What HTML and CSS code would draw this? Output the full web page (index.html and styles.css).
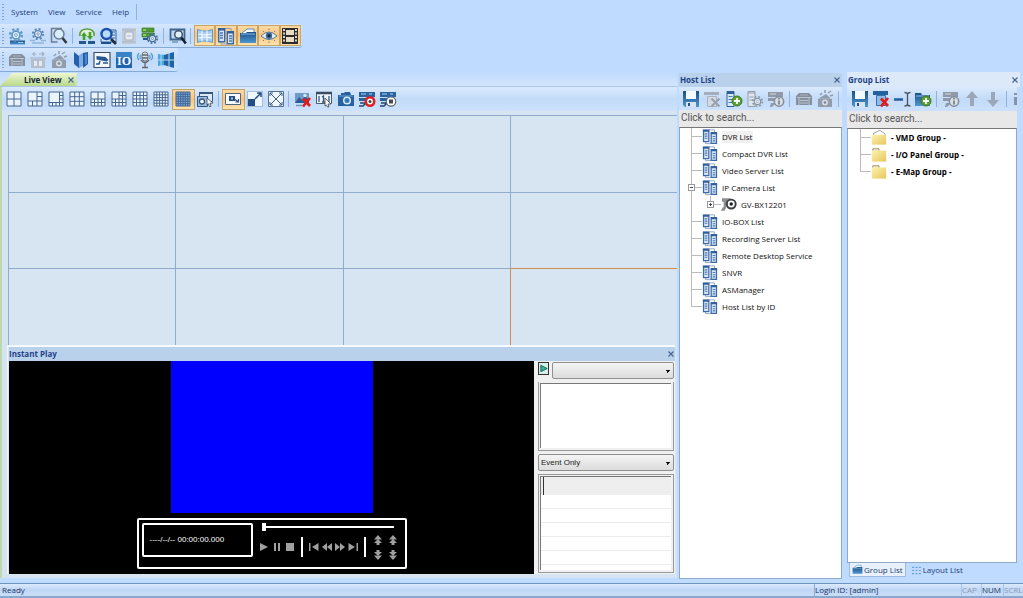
FILE: index.html
```html
<!DOCTYPE html>
<html lang="en">
<head>
<meta charset="utf-8">
<title>Control Center</title>
<link rel="stylesheet" href="styles.css">
</head>
<body>
<svg class="defs" aria-hidden="true">
  <defs>
    <linearGradient id="blue" x1="0" y1="0" x2="0" y2="1"><stop offset="0" stop-color="#1c4f86"/><stop offset="1" stop-color="#4d97d3"/></linearGradient>
    <linearGradient id="yel" x1="0" y1="0" x2="1" y2="1"><stop offset="0" stop-color="#fff3b0"/><stop offset="1" stop-color="#e6c65c"/></linearGradient>
    <symbol id="gearshape" viewBox="0 0 18 18"><circle cx="9" cy="9" r="6.6" fill="none" stroke="currentColor" stroke-width="2.4" stroke-dasharray="2.6 2.58"/><circle cx="9" cy="9" r="4.4" fill="#e6f2fc" stroke="currentColor" stroke-width="1.8"/><circle cx="9" cy="9" r="1.6" fill="#fff" stroke="currentColor"/></symbol>
    <symbol id="gear" viewBox="0 0 18 18"><path d="M2 13.500h15v4H2z" fill="url(#blue)"/><use href="#gearshape" color="#5b93c4" x="0" y="0" width="16" height="16"/><path d="M10 15.500h5" stroke="#9cc9ee"/></symbol>
    <symbol id="gear2" viewBox="0 0 18 18"><use href="#gearshape" color="#5a82b0" x="2" width="14" height="14"/><path d="M1 13.500h5M12 13.500h5M3 16h12" stroke="#8db5dd" stroke-width="1.400"/></symbol>
    <symbol id="loglens" viewBox="0 0 18 18"><path d="M1 1.500h11M1.500 1v14h6" fill="none" stroke="#6d7d8e" stroke-width="1.500"/><circle cx="9" cy="7" r="5" fill="#d8ecfb" stroke="#6d7f91" stroke-width="1.500"/><path d="M12.500 11l4 5" stroke="#33383f" stroke-width="2.600"/></symbol>
    <symbol id="update" viewBox="0 0 18 18"><path d="M2 9C1 4 5 2 9 2s8 2 7 7" fill="#dff0d9" stroke="#5d9a3c" stroke-width="1.500"/><path d="M6 5l3 4H7.300v4h-2.600V9H3zM12 13l-3-4h1.700V5h2.600v4H15z" fill="#43a224"/><path d="M1 14h7v3H1zM10 14h7v3h-7z" fill="#24588f"/></symbol>
    <symbol id="hostlens" viewBox="0 0 18 18"><path d="M8 3h9v12H2v-3" fill="#cfe3f7" stroke="#2f6098"/><path d="M11 5h5M11 8h5M11 11h5" stroke="#2f6098"/><circle cx="7.500" cy="7" r="5" fill="#b5dcf9" stroke="#1a4fb0" stroke-width="2.400"/><path d="M2 16h10" stroke="#1a4f90" stroke-width="2"/><path d="M12 12l5 5" stroke="#222b3a" stroke-width="2.600"/></symbol>
    <symbol id="frame" viewBox="0 0 18 18"><path d="M2 1h14v16H2z" fill="#c4ccd8"/><path d="M5 5h8v8H5z" fill="#e7ebf0" stroke="#a4adbb"/><path d="M7 9h4M2 3h14M2 15h14" stroke="#abb4c3"/></symbol>
    <symbol id="servergear" viewBox="0 0 18 18"><path d="M1 1h12v4H1zM1 6h12v4H1z" fill="#4f9b31" stroke="#3a7d22" stroke-width=".7"/><path d="M2 3h3M2 8h3" stroke="#d3efbe"/><path d="M2 12h5" stroke="#24588f" stroke-width="2"/><use href="#gearshape" color="#456d9a" x="5" y="5" width="13" height="13"/></symbol>
    <symbol id="screenlens" viewBox="0 0 18 18"><path d="M1.500 2.500h14v10h-14z" fill="#bed8f1" stroke="#3f648f" stroke-width="1.800"/><path d="M3 15h6" stroke="#6f93b9" stroke-width="1.500"/><circle cx="9.500" cy="7.500" r="3.800" fill="#e2f1fc" stroke="#41526a" stroke-width="1.500"/><path d="M12.300 10.500l4.500 6" stroke="#17202c" stroke-width="2.500"/></symbol>
    <symbol id="gridwall" viewBox="0 0 18 18"><path d="M1.500 2.500c5 2 10 2 15 0v13c-5-2-10-2-15 0z" fill="#a6cdf1" stroke="#5f98d2"/><path d="M6 3.500v11M11 3.500v11M2 7c5 1 10 1 14 0M2 11c5-1 10-1 14 0" fill="none" stroke="#f2f8fe" stroke-width="1.200"/></symbol>
    <symbol id="hosts" viewBox="0 0 18 18"><path d="M8 1.500h6v3M4 15v2h6" fill="none" stroke="#8ba0bb"/><path d="M1.700 1.700h6v13h-6z" fill="#d7e5f5" stroke="#3c6aa6" stroke-width="1.400"/><path d="M10.300 4.700h6v12h-6z" fill="#d7e5f5" stroke="#3c6aa6" stroke-width="1.400"/><path d="M1 2.500h7M10 5.500h7" stroke="#315f99" stroke-width="2.200"/><path d="M3 6h3M3 8.500h3M3 11h3M12 9h3M12 11.500h3M12 14h3" stroke="#4e7ab5" stroke-width="1.300"/></symbol>
    <symbol id="bluefolder" viewBox="0 0 18 18"><path d="M3 6l5-4h7v4" fill="#f5fbff" stroke="#5c8fc0"/><path d="M1 6h6l1-1h9v11H1z" fill="url(#blue)"/><path d="M2 7h14" stroke="#84bdec"/></symbol>
    <symbol id="eye" viewBox="0 0 18 18"><path d="M1 9q8-8 16 0q-8 7-16 0z" fill="#e7f0f8" stroke="#53779d"/><circle cx="9" cy="8.800" r="3.200" fill="#3d668f"/><circle cx="9" cy="8.800" r="1.300" fill="#0d1f33"/><path d="M3 4l1 1M9 1.500V3M15 4l-1 1M3 14l1-1M9 16v-1.500M15 14l-1-1" stroke="#6585a8"/></symbol>
    <symbol id="film" viewBox="0 0 18 18"><path d="M1 1h16v16H1z" fill="#302a28"/><path d="M5 3h8v5H5zM5 10h8v5H5z" fill="#e6dcc8"/><path d="M3 2v14M15 2v14" stroke="#fff" stroke-width="1.600" stroke-dasharray="2 1.500"/></symbol>
    <symbol id="rack" viewBox="0 0 18 18"><path d="M4 3h10l3 3v9H1V6z" fill="#858f9e"/><path d="M2 7.500h14M5 10.500h8M5 13h8M4 8v7M14 8v7" stroke="#bac3cf"/><path d="M5 5h8" stroke="#a7b1bf"/></symbol>
    <symbol id="iogray" viewBox="0 0 18 18"><path d="M2 8h14v9H2z" fill="#b7becb"/><path d="M5 10h3v5H5zM10 10h3v5h-3z" fill="#e4e9ef"/><path d="M3 3h4M5 1v4M10 3h5M13 1l2 2-2 2M1 7h16" fill="none" stroke="#a5afbe" stroke-width="1.200"/></symbol>
    <symbol id="alarm" viewBox="0 0 18 18"><path d="M2 9h14v8H2z" fill="#929cab"/><path d="M5 8l5-3 3 3zM4 5l2-2M9 3V0M12 3l3-2M14 6l3-1" fill="#8b95a4" stroke="#929cab" stroke-width="1.500"/><circle cx="9" cy="12.500" r="3" fill="#d5dbe3"/><circle cx="9" cy="12.500" r="1.300" fill="#7d8796"/></symbol>
    <symbol id="map" viewBox="0 0 18 18"><path d="M2 1l5 4v12l-5-4zM7 5l4-3v12l-4 3zM11 2l5-1v12l-5 4z" fill="#275faa"/><path d="M7 5l4-3v12l-4 3z" fill="#79aee4"/><path d="M14 3v10" stroke="#5b93d3" stroke-width="1.500"/></symbol>
    <symbol id="cam" viewBox="0 0 18 18"><path d="M1 1.500h16v15H1z" fill="#f4f8fc" stroke="#3d4f66" stroke-width="1.200"/><path d="M3.500 5l9 1 3 3-2 1.500-10-2z" fill="#25568f"/><path d="M7 10l-1 3H3M10 12h5" fill="none" stroke="#25568f" stroke-width="1.500"/></symbol>
    <symbol id="iobadge" viewBox="0 0 18 18"><path d="M1 1h16v16H1z" fill="#1e65ae"/><path d="M1 1h16v6H1z" fill="#3b83c7"/><text x="9" y="14" text-anchor="middle" font-family="Liberation Serif, serif" font-size="12" font-weight="700" fill="#fff">IO</text></symbol>
    <symbol id="mic" viewBox="0 0 18 18"><rect x="6" y="1" width="6" height="9" rx="3" fill="#dce1e6" stroke="#777d85"/><path d="M6 4h6M6 7h6M5 9q4 5 8 0M9 12v4M6 16.500h6" fill="none" stroke="#626870" stroke-width="1.300"/><path d="M3 2q-3 4 0 7M15 2q3 4 0 7M4.500 4q-1 2 0 4M13.500 4q1 2 0 4" fill="none" stroke="#56a0d2" stroke-width="1.300"/></symbol>
    <symbol id="wall" viewBox="0 0 18 18"><path d="M1 3l6 1v10l-6 1z" fill="#49a5dc"/><path d="M7 4l10-3v16L7 14z" fill="#1e64a5"/><path d="M1 9h16M4 3v12M12 2v14" stroke="#b9dcf5"/></symbol>
    <symbol id="g4" viewBox="0 0 18 18"><path d="M2 2h14v14H2zM9 2v14M2 9h14"/></symbol>
    <symbol id="g6" viewBox="0 0 18 18"><path d="M2 2h14v14H2zM11 2v14M2 11h14M11 6.500h5M6.500 11v5"/></symbol>
    <symbol id="g8" viewBox="0 0 18 18"><path d="M2 2h14v14H2zM12.500 2v14M2 12.500h14M12.500 5.500h3.500M12.500 9h3.500M5.500 12.500v3.500M9 12.500v3.500"/></symbol>
    <symbol id="g9" viewBox="0 0 18 18"><path d="M2 2h14v14H2zM6.700 2v14M11.300 2v14M2 6.700h14M2 11.300h14"/></symbol>
    <symbol id="g10" viewBox="0 0 18 18"><path d="M2 2h14v14H2zM9 2v14M2 9h14M2 12.500h14M5.500 9v7M12.500 9v7"/></symbol>
    <symbol id="g13" viewBox="0 0 18 18"><path d="M2 2h14v14H2zM9 2v14M2 9h14M9 5.500h7M12.500 2v14M2 12.500h14M5.500 9v7"/></symbol>
    <symbol id="g16" viewBox="0 0 18 18"><path d="M2 2h14v14H2zM5.500 2v14M9 2v14M12.500 2v14M2 5.500h14M2 9h14M2 12.500h14"/></symbol>
    <symbol id="g25" viewBox="0 0 18 18"><path d="M2 2h14v14H2zM4.800 2v14M7.600 2v14M10.400 2v14M13.200 2v14M2 4.800h14M2 7.600h14M2 10.400h14M2 13.200h14"/></symbol>
    <symbol id="g36" viewBox="0 0 18 18"><path fill="#78aee4" d="M2 2h14v14H2zM4.300 2v14M6.700 2v14M9 2v14M11.300 2v14M13.700 2v14M2 4.300h14M2 6.700h14M2 9h14M2 11.300h14M2 13.700h14"/></symbol>
    <symbol id="custom" viewBox="0 0 18 18"><path d="M3.500 2.500h13v9h-13z" fill="#dceaf8" stroke="#35587f"/><path d="M3 3h14" stroke="#35587f" stroke-width="2"/><path d="M1.500 6.500h10v10h-10z" fill="#9bbbdc" stroke="#35587f"/><circle cx="6" cy="11.500" r="2.500" fill="#fff" stroke="#35587f" stroke-width="1.300"/><path d="M11 8l6 5-3 .3 1 3-1.500.5-1-3-1.500 1z" fill="#fff" stroke="#3c4650" stroke-width=".8"/></symbol>
    <symbol id="pip" viewBox="0 0 18 18"><path d="M1.500 3.500h15v11h-15z" fill="#f6faff" stroke="#4d6784"/><path d="M5 6h6v5H5z" fill="#244f80"/><path d="M7 7.500h2v2H7z" fill="#a5c6e7"/><path d="M11 9.500l3.500 2.500M14.500 9v3h-3" fill="none" stroke="#244f80" stroke-width="1.200"/></symbol>
    <symbol id="zoomto" viewBox="0 0 18 18"><path d="M1.500 1.500h15v15h-15z" fill="#eef6fe" stroke="#7390af" stroke-dasharray="1 1"/><path d="M2 9h7v7H2z" fill="#224f83"/><path d="M9 9l6-6M11 3h4v4" fill="none" stroke="#224f83" stroke-width="1.500"/></symbol>
    <symbol id="full" viewBox="0 0 18 18"><path d="M1.500 1.500h15v15h-15z" fill="#f0f7fe" stroke="#54718f"/><path d="M3 3l12 12M15 3L3 15M3 6V3h3M12 3h3v3M3 12v3h3M12 15h3v-3" fill="none" stroke="#3c5d80"/></symbol>
    <symbol id="redx" viewBox="0 0 18 18"><path d="M9 8.500l7 7.500M16 8L9 16.500" stroke="#e01b1b" stroke-width="2.700"/></symbol>
    <symbol id="camx" viewBox="0 0 18 18"><path d="M1 3h14v10H1z" fill="#6d9ac9"/><path d="M1 13l4-6 3 3 3-4 4 4v3z" fill="#2b5d94"/><circle cx="11" cy="5.500" r="1.700" fill="#d6e8f8"/><path d="M2 15.500h6" stroke="#7796b7" stroke-width="1.500"/><use href="#redx"/></symbol>
    <symbol id="pages" viewBox="0 0 18 18"><path d="M1.500 2.500h15v11h-15z" fill="#edf4fa" stroke="#4a5b6e"/><path d="M1 3h16" stroke="#3b4c61" stroke-width="2.500"/><path d="M4 6v6M14 6v6M7 7l1.500-1v6M7 12h3" fill="none" stroke="#35587f" stroke-width="1.300"/><path d="M10 8l6 6-3 0 1 3-1.500 0-1-2-1.500 1z" fill="#fff" stroke="#444" stroke-width=".8"/></symbol>
    <symbol id="photo" viewBox="0 0 18 18"><path d="M1 5h3V3h3l1-1h5l1 3h3v11H1z" fill="#27629f"/><path d="M2 6h14" stroke="#6ea6db"/><circle cx="10" cy="10.500" r="4" fill="#d7eafa"/><circle cx="10" cy="10.500" r="2.500" fill="#3a75b0"/></symbol>
    <symbol id="recsrv" viewBox="0 0 18 18"><path d="M1 2h16v5H1zM1 8h8v3H1z" fill="#2b639f"/><path d="M3 4h5M11 4h3" stroke="#afd1f1" stroke-width="1.200"/><path d="M2 13h6l-3 3H1" fill="none" stroke="#23466e" stroke-width="1.500"/></symbol>
    <symbol id="rec" viewBox="0 0 18 18"><use href="#recsrv"/><circle cx="12" cy="11.500" r="4.200" fill="#fff" stroke="#d92323" stroke-width="2.600"/><circle cx="12" cy="11.500" r="1.500" fill="#444"/></symbol>
    <symbol id="recstop" viewBox="0 0 18 18"><use href="#recsrv"/><circle cx="12" cy="11.500" r="4.700" fill="#fff" stroke="#5d646c" stroke-width="1.200"/><path d="M10 9.500h4v4h-4z" fill="#444a52"/></symbol>
    <symbol id="save" viewBox="0 0 18 18"><path d="M1 1h16v16H3l-2-2z" fill="url(#blue)"/><path d="M4 1h10v8H4z" fill="#f4f9fe"/><path d="M4 12h10v5H4z" fill="#d8e3ee"/><path d="M6 13h2v3H6z" fill="#234f82"/></symbol>
    <symbol id="delgray" viewBox="0 0 18 18"><path d="M1 2h15v3H1z" fill="#a4aebb"/><path d="M4.500 6.500h9v10h-9z" fill="#d3dae3" stroke="#a9b2be"/><path d="M8.500 8.500l8 8M16.500 8.500l-8 8" stroke="#98a2af" stroke-width="2.200"/></symbol>
    <symbol id="plus" viewBox="0 0 18 18"><circle cx="12" cy="11" r="5" fill="#5aa233" stroke="#3d7a20"/><path d="M12 8v6M9 11h6" stroke="#fff" stroke-width="1.800"/></symbol>
    <symbol id="addhost" viewBox="0 0 18 18"><path d="M2 1.500h7v15H2z" fill="#d8e9f8" stroke="#315f99"/><path d="M2 3h7" stroke="#315f99" stroke-width="2"/><path d="M3.500 6.500h4M3.500 9.500h4M3.500 12.500h4" stroke="#4778af"/><use href="#plus"/></symbol>
    <symbol id="hostgear" viewBox="0 0 18 18"><path d="M2 1.500h7v15H2z" fill="#e1e7ed" stroke="#929dab"/><path d="M2 3h7M3.500 7h4M3.500 10h4" stroke="#929dab"/><use href="#gearshape" color="#8a97a7" x="5" y="5" width="13" height="13"/></symbol>
    <symbol id="info" viewBox="0 0 18 18"><path d="M1 2h15v5H1zM1 8h7v3H1zM4 13h5l-4 4H3z" fill="#8f99a7"/><path d="M3 4h6" stroke="#d4dae1"/><circle cx="12" cy="11.500" r="4.700" fill="#d9dee5" stroke="#828c9a" stroke-width="1.500"/><path d="M12 8v1.500M12 10.500v4" stroke="#7b8593" stroke-width="1.800"/></symbol>
    <symbol id="delgroup" viewBox="0 0 18 18"><path d="M1 1h15v4H1z" fill="#245f9f"/><path d="M4.500 5.500h9v10h-9z" fill="#8dbce9" stroke="#3672ad"/><use href="#redx"/></symbol>
    <symbol id="rename" viewBox="0 0 18 18"><path d="M1 9.500h9" stroke="#245f9f" stroke-width="2.500"/><path d="M11.500 2.500q3 0 3 2q0-2 3-2M11.500 16q3 0 3-2q0 2 3 2M14.500 4v10" fill="none" stroke="#45515f" stroke-width="1.300"/></symbol>
    <symbol id="addfolder" viewBox="0 0 18 18"><path d="M1 3h6l1 2h8v11H1z" fill="url(#blue)"/><path d="M2 6h13" stroke="#8dc2ef"/><use href="#plus"/></symbol>
    <symbol id="up" viewBox="0 0 18 18"><path d="M9 1l6 7h-4v8H7V8H3z" fill="#9ba6b8"/></symbol>
    <symbol id="down" viewBox="0 0 18 18"><path d="M9 17l6-7h-4V2H7v8H3z" fill="#9ba6b8"/></symbol>
    <symbol id="part" viewBox="0 0 18 18"><path d="M2 3h10v2H2zM2 7h3v8H2z" fill="#8793a5"/></symbol>
    <symbol id="ipcam" viewBox="0 0 18 18"><path d="M1 2h10v4H6v6l-2 4H0l2-4h1V6H1z" fill="#8b8e91"/><circle cx="11.500" cy="8.500" r="5" fill="#fff" stroke="#3a3c3e" stroke-width="2.200"/><circle cx="11.500" cy="8.500" r="2" fill="#222"/></symbol>
    <symbol id="folder" viewBox="0 0 18 18"><path d="M2 5V2.500h7V5" fill="#eeeacb" stroke="#9b8c62"/><path d="M1 4.500h16v12.500H1z" fill="url(#yel)"/></symbol>
    <symbol id="openfolder" viewBox="0 0 18 18"><path d="M3 7V4l7-3 6 4v3" fill="#fff" stroke="#999"/><path d="M1 6h16v11H1z" fill="url(#yel)"/></symbol>
    <symbol id="layout" viewBox="0 0 18 18"><path d="M2 4h14M2 9h14M2 14h14" stroke="#5d9bd8" stroke-width="2" stroke-dasharray="3 2.500"/></symbol>
    <symbol id="close" viewBox="0 0 8 8"><path d="M1.500 1.500l5 5M6.500 1.500l-5 5" stroke="#46628e" stroke-width="1.100"/></symbol>
    <symbol id="play" viewBox="0 0 10 10"><path d="M1 1l8 4-8 4z"/></symbol>
    <symbol id="pause" viewBox="0 0 10 10"><path d="M2 1h2v8H2zM6 1h2v8H6z"/></symbol>
    <symbol id="stop" viewBox="0 0 10 10"><path d="M1 1h8v8H1z"/></symbol>
    <symbol id="first" viewBox="0 0 10 10"><path d="M0 1h1.500v8H0zM9.500 1v8L3 5z"/></symbol>
    <symbol id="rew" viewBox="0 0 10 10"><path d="M5 1v8L0 5zM10 1v8L5 5z"/></symbol>
    <symbol id="ff" viewBox="0 0 10 10"><path d="M0 1v8l5-4zM5 1v8l5-4z"/></symbol>
    <symbol id="last" viewBox="0 0 10 10"><path d="M8.500 1H10v8H8.500zM.5 1v8L7 5z"/></symbol>
    <symbol id="dup" viewBox="0 0 10 10"><path d="M5 0l4 4.500H1zM5 4l4 4H6.500v2h-3V8H1z"/></symbol>
    <symbol id="ddn" viewBox="0 0 10 10"><path d="M5 10l4-4.500H1zM5 6L1 2h2.500V0h3v2H9z"/></symbol>
  </defs>
</svg>

<header class="top">
  <nav class="menu">
    <span class="grip"></span>
    <button>System</button><button>View</button><button>Service</button><button>Help</button>
    <span class="sep"></span>
  </nav>
  <div class="bar">
    <span class="grip"></span>
    <div class="set s3"><button aria-label="System configure"><svg><use href="#gear"/></svg></button><button aria-label="Preferences"><svg><use href="#gear2"/></svg></button><button aria-label="Log"><svg><use href="#loglens"/></svg></button></div>
    <span class="sep"></span>
    <div class="set s4"><button aria-label="Update"><svg><use href="#update"/></svg></button><button aria-label="Search host"><svg><use href="#hostlens"/></svg></button><button aria-label="Layout" disabled><svg><use href="#frame"/></svg></button><button aria-label="Host settings"><svg><use href="#servergear"/></svg></button></div>
    <span class="sep"></span>
    <div class="set s1"><button aria-label="Find"><svg><use href="#screenlens"/></svg></button></div>
    <span class="sep"></span>
    <div class="set s5"><button class="on" aria-label="Live view"><svg><use href="#gridwall"/></svg></button><button class="on" aria-label="Host list"><svg><use href="#hosts"/></svg></button><button class="on" aria-label="Group list"><svg><use href="#bluefolder"/></svg></button><button class="on" aria-label="Monitor"><svg><use href="#eye"/></svg></button><button class="on" aria-label="Instant play"><svg><use href="#film"/></svg></button></div>
  </div>
  <div class="bar">
    <span class="grip"></span>
    <div class="set s8"><button aria-label="Remote DVR" disabled><svg><use href="#rack"/></svg></button><button aria-label="I/O" disabled><svg><use href="#iogray"/></svg></button><button aria-label="Alarm" disabled><svg><use href="#alarm"/></svg></button><button aria-label="E-Map"><svg><use href="#map"/></svg></button><button aria-label="Camera"><svg><use href="#cam"/></svg></button><button aria-label="I/O panel"><svg><use href="#iobadge"/></svg></button><button aria-label="Audio broadcast"><svg><use href="#mic"/></svg></button><button aria-label="Video wall"><svg><use href="#wall"/></svg></button></div>
  </div>
</header>

<main class="work">
  <section class="live">
    <div class="tabs"><h2 class="tab">Live View <button aria-label="Close Live View"><svg class="x"><use href="#close"/></svg></button></h2></div>
    <div class="frame">
      <div class="tools livetools">
        <div class="set s10 grids"><button aria-label="4 divisions"><svg><use href="#g4"/></svg></button><button aria-label="6 divisions"><svg><use href="#g6"/></svg></button><button aria-label="8 divisions"><svg><use href="#g8"/></svg></button><button aria-label="9 divisions"><svg><use href="#g9"/></svg></button><button aria-label="10 divisions"><svg><use href="#g10"/></svg></button><button aria-label="13 divisions"><svg><use href="#g13"/></svg></button><button aria-label="16 divisions"><svg><use href="#g16"/></svg></button><button aria-label="25 divisions"><svg><use href="#g25"/></svg></button><button class="on" aria-label="36 divisions"><svg><use href="#g36"/></svg></button><button aria-label="Custom layout"><svg><use href="#custom"/></svg></button></div>
        <span class="sep"></span>
        <div class="set s3"><button class="on" aria-label="Picture in picture"><svg><use href="#pip"/></svg></button><button aria-label="Zoom"><svg><use href="#zoomto"/></svg></button><button aria-label="Full screen"><svg><use href="#full"/></svg></button></div>
        <span class="sep"></span>
        <div class="set s5"><button aria-label="Disconnect all"><svg><use href="#camx"/></svg></button><button aria-label="Pages"><svg><use href="#pages"/></svg></button><button aria-label="Snapshot"><svg><use href="#photo"/></svg></button><button aria-label="Start recording"><svg><use href="#rec"/></svg></button><button aria-label="Stop recording"><svg><use href="#recstop"/></svg></button></div>
      </div>
      <div class="matrix"><i></i><i></i><i></i><i></i><i></i><i></i><i></i><i></i><i></i><i></i><i></i><i class="sel"></i></div>
      <section class="instant">
        <h2 class="title">Instant Play <button aria-label="Close Instant Play"><svg class="x"><use href="#close"/></svg></button></h2>
        <div class="playrow">
          <div class="player">
            <div class="video"></div>
            <div class="deck">
              <output class="time">----/--/-- 00:00:00.000</output>
              <div class="controls">
                <input type="range" min="0" max="100" value="0" aria-label="Position">
                <div class="keys">
                  <button aria-label="Play"><svg><use href="#play"/></svg></button><button aria-label="Pause"><svg><use href="#pause"/></svg></button><button aria-label="Stop"><svg><use href="#stop"/></svg></button>
                  <span class="bar-v"></span>
                  <button aria-label="First"><svg><use href="#first"/></svg></button><button aria-label="Rewind"><svg><use href="#rew"/></svg></button><button aria-label="Forward"><svg><use href="#ff"/></svg></button><button aria-label="Last"><svg><use href="#last"/></svg></button>
                  <span class="bar-v"></span>
                  <div class="speeds"><button aria-label="Speed up"><svg><use href="#dup"/></svg></button><button aria-label="Volume up"><svg><use href="#dup"/></svg></button><button aria-label="Speed down"><svg><use href="#ddn"/></svg></button><button aria-label="Volume down"><svg><use href="#ddn"/></svg></button></div>
                </div>
              </div>
            </div>
          </div>
          <aside class="side">
            <div class="pick"><button class="go" aria-label="Query"><svg><use href="#play"/></svg></button><select aria-label="Host"><option></option></select></div>
            <div class="sunken"><div class="well"></div></div>
            <select aria-label="Filter"><option>Event Only</option></select>
            <div class="sunken tall"><div class="well lined"></div></div>
          </aside>
        </div>
      </section>
    </div>
  </section>

  <section class="panel host">
    <h2 class="title">Host List <button aria-label="Close Host List"><svg class="x"><use href="#close"/></svg></button></h2>
    <div class="tools">
      <div class="set s5"><button aria-label="Save"><svg><use href="#save"/></svg></button><button aria-label="Delete" disabled><svg><use href="#delgray"/></svg></button><button aria-label="Add host"><svg><use href="#addhost"/></svg></button><button aria-label="Host settings" disabled><svg><use href="#hostgear"/></svg></button><button aria-label="Host information" disabled><svg><use href="#info"/></svg></button></div>
      <span class="sep"></span>
      <div class="set s2"><button aria-label="Remote DVR" disabled><svg><use href="#rack"/></svg></button><button aria-label="Alarm" disabled><svg><use href="#alarm"/></svg></button></div>
      <span class="sep"></span>
    </div>
    <input class="search" type="text" placeholder="Click to search..." aria-label="Search hosts">
    <ul class="tree">
      <li><span class="twig"></span><svg><use href="#hosts"/></svg><span class="picked">DVR List</span></li>
      <li><span class="twig"></span><svg><use href="#hosts"/></svg>Compact DVR List</li>
      <li><span class="twig"></span><svg><use href="#hosts"/></svg>Video Server List</li>
      <li><span class="twig"><button class="exp" aria-label="Collapse"></button></span><svg><use href="#hosts"/></svg>IP Camera List</li>
      <li><span class="twig through"></span><span class="twig end"><button class="exp plus" aria-label="Expand"></button></span><svg><use href="#ipcam"/></svg>GV-BX12201</li>
      <li><span class="twig"></span><svg><use href="#hosts"/></svg>IO-BOX List</li>
      <li><span class="twig"></span><svg><use href="#hosts"/></svg>Recording Server List</li>
      <li><span class="twig"></span><svg><use href="#hosts"/></svg>Remote Desktop Service</li>
      <li><span class="twig"></span><svg><use href="#hosts"/></svg>SNVR</li>
      <li><span class="twig"></span><svg><use href="#hosts"/></svg>ASManager</li>
      <li><span class="twig end"></span><svg><use href="#hosts"/></svg>Host List by ID</li>
    </ul>
  </section>

  <section class="panel group">
    <h2 class="title">Group List <button aria-label="Close Group List"><svg class="x"><use href="#close"/></svg></button></h2>
    <div class="tools">
      <div class="set s4"><button aria-label="Save"><svg><use href="#save"/></svg></button><button aria-label="Delete group"><svg><use href="#delgroup"/></svg></button><button aria-label="Rename"><svg><use href="#rename"/></svg></button><button aria-label="Add group"><svg><use href="#addfolder"/></svg></button></div>
      <span class="sep"></span>
      <div class="set s3"><button aria-label="Information" disabled><svg><use href="#info"/></svg></button><button aria-label="Move up" disabled><svg><use href="#up"/></svg></button><button aria-label="Move down" disabled><svg><use href="#down"/></svg></button></div>
      <span class="sep"></span>
      <div class="set s1"><button aria-label="More" disabled><svg><use href="#part"/></svg></button></div>
    </div>
    <input class="search" type="text" placeholder="Click to search..." aria-label="Search groups">
    <ul class="tree bold">
      <li><span class="twig"></span><svg><use href="#openfolder"/></svg>- VMD Group -</li>
      <li><span class="twig"></span><svg><use href="#folder"/></svg>- I/O Panel Group -</li>
      <li><span class="twig end"></span><svg><use href="#folder"/></svg>- E-Map Group -</li>
    </ul>
    <div class="foot"><button class="current"><svg><use href="#bluefolder"/></svg>Group List</button><button><svg><use href="#layout"/></svg>Layout List</button></div>
  </section>
</main>

<footer class="status">
  <span class="ready">Ready</span><span class="login">Login ID: [admin]</span><span class="lock">CAP</span><span class="lock lit">NUM</span><span class="lock">SCRL</span>
</footer>
</body>
</html>
```

FILE: styles.css
```css
* { box-sizing: border-box; }
html, body { height: 100%; }
body {
  margin: 0;
  display: flex;
  flex-direction: column;
  overflow: hidden;
  background: #bfdbff;
  color: #1c2f55;
  font: 8px/12px "Open Sans", "Noto Sans", sans-serif;
}
button, select, input { font: inherit; color: inherit; }
button { margin: 0; padding: 0; border: 0; background: none; display: flex; align-items: center; justify-content: center; }
.defs { position: absolute; width: 0; height: 0; }
ul { list-style: none; margin: 0; padding: 0; }
h2 { margin: 0; font-size: 8px; line-height: 12px; }
.x { width: 8px; height: 8px; }

/* menu and main toolbars */
.top { display: flex; flex-direction: column; align-items: flex-start; }
.menu { display: flex; align-items: center; height: 24px; padding-left: 2px; }
.menu button { padding: 0 5px; height: 18px; color: #22407c; }
.grip { width: 2px; height: 16px; margin-right: 2px; background: repeating-linear-gradient(#7ea3d3 0 1px, transparent 1px 3px); }
.bar {
  display: flex;
  align-items: center;
  height: 24px;
  padding: 0 1px 0 2px;
  border-bottom: 1px solid #86aad8;
  border-radius: 0 3px 3px 0;
  background: linear-gradient(#d6e7fc, #c2dbfa 50%, #c9e0fd);
}
.sep { flex: none; width: 6px; height: 16px; background: linear-gradient(#8fb2df, #8fb2df) 2px 0 / 1px 100% no-repeat; }
.set { display: flex; flex: none; }
.set button { flex: 1; height: 21px; }
.set svg { width: 18px; height: 18px; flex: none; }
.set .on { border: 1px solid #c7a468; background: linear-gradient(#fbd9a5, #fbc47b 50%, #fde3ad); }
.s1 { width: 21px; }
.s2 { width: 43px; }
.s3 { width: 64px; }
.s4 { width: 85px; }
.s5 { width: 107px; }
.s8 { width: 171px; }
.s10 { width: 213px; }
.grids svg { fill: #eaf4fe; stroke: #45678f; }

/* work area */
.work { flex: 1; min-height: 0; display: flex; }
.live { flex: 1; min-width: 0; display: flex; flex-direction: column; }
.tabs { flex: none; height: 15px; padding-top: 1px; background: linear-gradient(#bfdbff, #d3e5fb); border-bottom: 1px solid #a9c6e8; }
.tab {
  display: flex;
  width: fit-content;
  align-items: center;
  gap: 5px;
  height: 13px;
  padding: 0 2px 0 24px;
  color: #16233a;
  background: linear-gradient(#eef6cf, #b9d98c);
  clip-path: polygon(12px 0, 100% 0, 100% 100%, 0 100%);
}
.frame { flex: 1; min-height: 0; display: flex; flex-direction: column; margin-bottom: 5px; border-left: 2px solid #bfd9ae; background: #d6e4f1; }
.tools { display: flex; align-items: center; overflow: hidden; height: 24px; background: linear-gradient(#dbeafd, #c3dbf8 50%, #cbe1fd); }
.livetools { flex: none; padding-left: 1px; }
.matrix { flex: 1; display: grid; grid-template: repeat(3, 1fr) / repeat(4, 1fr); margin: 4px 0 0 6px; }
.matrix i { border: solid #8faccd; border-width: 1px 0 0 1px; background: #d7e4f1; }
.matrix .sel { border-color: #d2904f; }
.title {
  display: flex;
  align-items: center;
  justify-content: space-between;
  height: 14px;
  padding: 0 1px;
  color: #1e4387;
  background: #bad1ec;
}
.instant { flex: none; margin: 0 2px 4px 5px; border-left: 1px solid #edf4fb; border-top: 2px solid #f5faff; padding-left: 1px; }
.instant .title { padding: 0; }
.playrow { display: flex; height: 213px; }
.player { flex: 1; display: flex; flex-direction: column; align-items: center; justify-content: space-between; padding-bottom: 5px; background: #000; }
.video { width: 202px; height: 152px; background: #00f; }
.deck { display: flex; width: 270px; height: 51px; padding: 3px; gap: 5px; border: 2px solid #fff; border-radius: 2px; }
.time { width: 111px; height: 34px; border: 2px solid #fff; border-radius: 2px; padding-left: 6px; color: #fff; font: 8px/30px "Liberation Sans", sans-serif; }
.controls { flex: 1; min-width: 0; }
.controls input { display: block; appearance: none; width: 132px; height: 8px; margin: 0 0 0 4px; background: linear-gradient(#fff, #fff) 0 3px / 100% 2px no-repeat; }
.controls input::-webkit-slider-thumb { appearance: none; width: 4px; height: 8px; background: #fff; }
.keys { display: flex; align-items: center; height: 32px; gap: 1px; }
.keys button { width: 14px; height: 15px; }
.keys svg { width: 10px; height: 10px; fill: #a0a0a0; }
.bar-v { flex: none; width: 2px; height: 20px; margin: 0 4px; background: #fff; }
.speeds { display: grid; grid-template-columns: 15px 15px; }
.side { width: 141px; padding: 1px 1px 1px 4px; display: flex; flex-direction: column; gap: 3px; background: #f0f0f0; color: #222; }
.pick { display: flex; gap: 3px; align-items: flex-start; }
.go { width: 11px; height: 13px; border: 1px solid #333; background: #d5f0e8; }
.go svg { width: 8px; height: 11px; fill: #36b39b; stroke: #164d43; }
.side select {
  appearance: none;
  flex: none;
  width: 100%;
  height: 17px;
  padding: 0 2px;
  border: 1px solid #909090;
  border-radius: 2px;
  font: 8px/15px "Liberation Sans", sans-serif;
  background:
    linear-gradient(to bottom left, #111 50%, transparent 50%) right 5px top 7px / 3px 3px no-repeat,
    linear-gradient(to bottom right, #111 50%, transparent 50%) right 2px top 7px / 3px 3px no-repeat,
    linear-gradient(#f4f4f4, #dcdcdc);
}
.pick select { flex: 1; min-width: 0; }
.sunken { flex: none; height: 69px; padding: 1px 2px 2px 1px; border: solid #999; border-width: 0 1px 1px 1px; }
.tall { flex: 1; border-top-width: 1px; }
.well { height: 100%; border: solid #777; border-width: 1px 0 0 1px; background: #fff; }
.lined { background: linear-gradient(#333, #333) 2px 0 / 1px 18px no-repeat, linear-gradient(#eee, #eee) 0 0 / 100% 18px no-repeat, repeating-linear-gradient(#fff 0 13px, #ececec 13px 14px) 0 18px; }

/* list panels */
.panel { display: flex; flex-direction: column; background: #bfdbff; }
.panel .tools { flex: none; padding-left: 1px; }
.host { width: 163px; margin: 1px 5px 4px 2px; }
.host .tools { height: 23px; }
.group { width: 170px; margin: 0 6px 4px 0; }
.group .title { height: 15px; margin-right: -3px; background: #dce9f8; }
.group .tools { padding-left: 2px; }
.search { width: 100%; height: 17px; padding: 0 2px 2px; border: 0; background: #e8e8e8; font: 10px/14px Roboto, sans-serif; flex: none; }
.search::placeholder { color: #555; opacity: 1; }
.tree { flex: 1; min-height: 0; padding-left: 11px; border: 1px solid #8fa9c9; border-top-color: #777; background: #fff; color: #111; }
.tree li { display: flex; align-items: center; height: 17px; white-space: nowrap; }
.tree svg { width: 16px; height: 17px; margin-right: 4px; flex: none; }
.picked { background: #f0f0f0; padding-right: 1px; }
.bold { padding-left: 12px; font-weight: 700; }
.bold li { color: #000; }
.twig {
  flex: none;
  width: 11px;
  height: 17px;
  display: flex;
  align-items: center;
  background: linear-gradient(#bbb, #bbb) 0 0 / 1px 100% no-repeat, linear-gradient(#bbb, #bbb) 0 8px / 100% 1px no-repeat;
}
.twig.end { background-size: 1px 9px, 100% 1px; }
.twig.through { width: 19px; background-size: 1px 100%, 0 0; }
.exp { width: 7px; height: 7px; margin-left: -3px; border: 1px solid #999; background: linear-gradient(#445, #445) center / 3px 1px no-repeat #fff; }
.exp.plus { background: linear-gradient(#445, #445) center / 3px 1px no-repeat, linear-gradient(#445, #445) center / 1px 3px no-repeat #fff; }
.foot { display: flex; gap: 3px; height: 16px; padding: 0 0 2px 2px; flex: none; color: #1d3a74; }
.foot button { padding: 0 2px; gap: 1px; }
.foot svg { width: 11px; height: 11px; }
.foot .current { background: #e8f1fd; border: 1px solid #9dbbe2; border-top: 0; }

/* status bar */
.status {
  display: flex;
  align-items: center;
  height: 15px;
  border-top: 1px solid #6f94bf;
  border-bottom: 2px solid #8aa7cd;
  background: linear-gradient(#dbe9fb, #bfd6f4 50%, #c9def9);
  color: #1c3563;
}
.ready { flex: 1; padding-left: 2px; }
.login { width: 147px; border-left: 1px solid #8caedb; }
.lock { color: #8c9db8; border-left: 1px solid #a9c5ea; width: 20px; }
.lock.lit { color: #1c3563; width: 22px; }
```
